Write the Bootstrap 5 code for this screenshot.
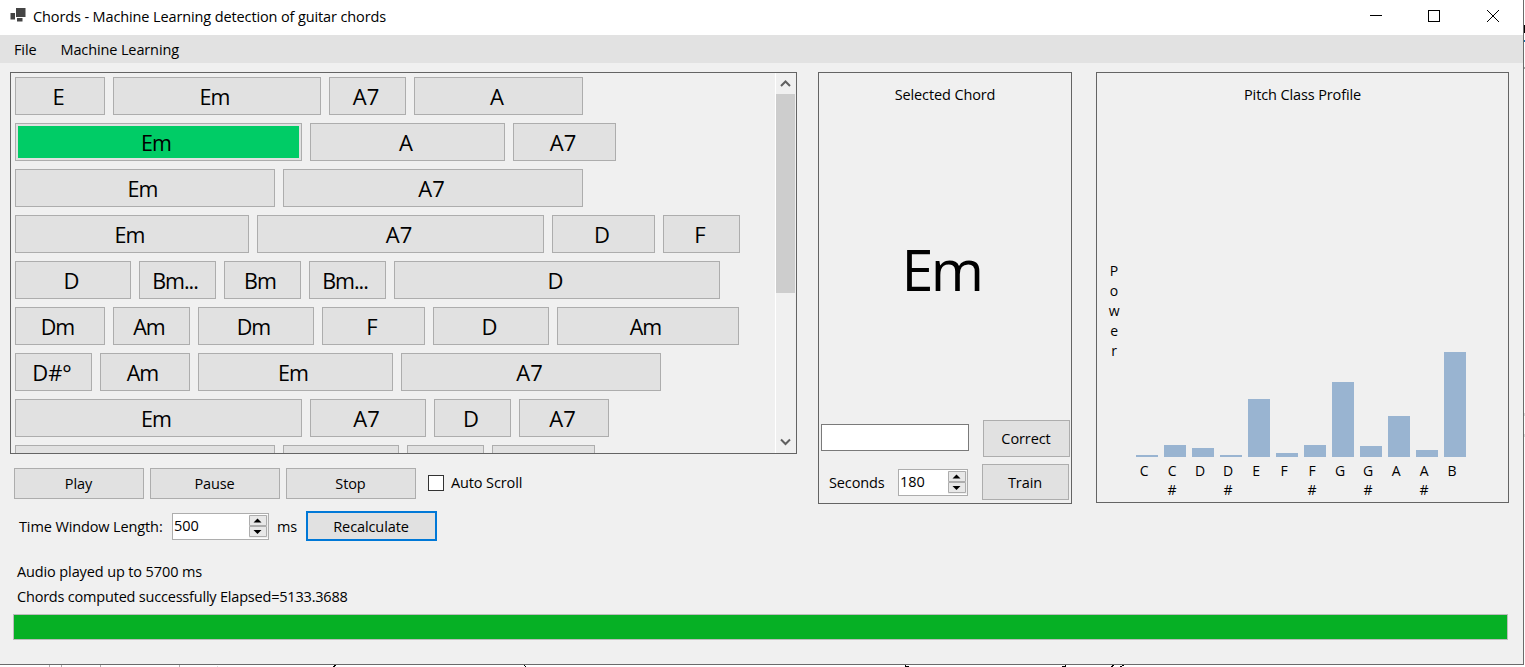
<!DOCTYPE html>
<html lang="en">
<head>
<meta charset="utf-8">
<title>Chords - Machine Learning detection of guitar chords</title>
<link href="https://cdn.jsdelivr.net/npm/bootstrap@5.3.0/dist/css/bootstrap.min.css" rel="stylesheet">
<style>
  body { width:1525px; height:667px; overflow:hidden; background:#fff; color:#000; font-family:"Open Sans","Noto Sans",sans-serif; font-size:14.5px; line-height:20px; letter-spacing:-.12px; font-stretch:88%; }
  .desk { width:1525px; height:667px; }
  .app-window { width:1524px; height:665px; background:#f0f0f0; border-right:1px solid #6b6b6b; border-bottom:1px solid #6b6b6b; }
  .title-bar { height:35px; background:#fff; padding:0 0 4px 10px; }
  .app-name { margin-left:6px; padding-top:2px; }
  .menu-row { height:28px; background:#e2e2e2; padding:2px 0 0 14px; gap:24px; }
  .work { padding:9px 14px 0 10px; height:442px; }
  .frame { border:1px solid #646464; }
  .left-col { width:787px; margin-right:21px; }
  .chord-list { height:382px; overflow:hidden; }
  .chord-rows { padding:4px; gap:8px; width:764px; }
  .chord-row { gap:8px; height:38px; }
  .wbtn { --bs-btn-padding-x:0; --bs-btn-padding-y:0; --bs-btn-border-radius:0; --bs-btn-color:#000; --bs-btn-bg:#e1e1e1; --bs-btn-border-color:#adadad; --bs-btn-hover-bg:#e5f1fb; --bs-btn-hover-border-color:#0078d7; --bs-btn-font-size:14.5px; --bs-btn-line-height:20px; flex:none; display:flex; align-items:center; justify-content:center; letter-spacing:-.1px; padding:1px 1px 0 0; }
  .chord { --bs-btn-font-size:22px; height:38px; padding:0 3px 1px 0; letter-spacing:0; }
  .chord.minor { font-size:21.5px; letter-spacing:-1px; padding:1px 5px 0 0; }
  .chord.playing { background:#00cc66; box-shadow:inset 0 0 0 2px #e1e1e1; }
  .scroller { width:21px; border-left:1px solid #fff; padding-right:1px; }
  .scroll-btn { height:21px; }
  .scroll-btn svg { display:block; }
  .thumb { height:199px; background:#cdcdcd; }
  .transport { padding:14px 0 0 4px; gap:6px; }
  .transport .wbtn { width:130px; height:31px; }
  .check { width:16px; height:16px; border:1px solid #333; background:#fff; margin:0 0 1px 6px; }
  .window-len { padding:12px 0 0 9px; height:42px; }
  .spin { height:27px; background:#fff; border:1px solid #adadad; padding:1px 0 1px 1px; }
  .spin-num { line-height:20px; letter-spacing:0; padding-top:1px; }
  .spin-btns { width:19px; background:#f0f0f0; }
  .spin-btns svg { display:block; }
  .wbtn.default { border:2px solid #0078d7; width:131px; height:30px; }
  .mid-col { width:254px; height:432px; margin-right:24px; }
  .panel-title { text-align:center; padding-top:12px; }
  .big-chord { font-size:57.5px; line-height:80px; letter-spacing:-2.5px; text-align:center; margin-top:124px; padding-right:7px; }
  .name-field { width:148px; height:27px; border:1px solid #7a7a7a; background:#fff; margin-top:4px; }
  .right-col { width:413px; height:431px; }
  .power { width:18px; text-align:center; font-size:14px; margin-left:8px; }
  .bars { height:120px; flex:none; padding-left:39px; gap:6px; }
  .bar { width:22px; background:#99b4d1; }
  .notes { padding-left:33px; font-size:14px; line-height:19px; padding-top:4px; text-align:center; }
  .notes > div { width:28px; }
  .status { padding:54px 0 0 17px; line-height:25px; }
  .elapsed { letter-spacing:-.2px; }
  .load { height:26px; margin:5px 15px 0 13px; border:1px solid #bcbcbc; --bs-progress-bg:#e6e6e6; --bs-progress-bar-bg:#06b025; --bs-progress-border-radius:0; }
  .behind { left:0; top:0; pointer-events:none; }
</style>
</head>
<body>
<div class="desk position-relative">
<div class="app-window d-flex flex-column">
  <header class="title-bar d-flex align-items-center justify-content-between">
    <div class="d-flex align-items-center">
      <svg width="17" height="17" viewBox="0 0 17 17"><path fill="#444" d="M6 1h9.500v9H6zM.5 6H5v6.500H.5zM7 11h5.500v3.500H7z"/></svg>
      <span class="app-name">Chords - Machine Learning detection of guitar chords</span>
    </div>
    <svg width="140" height="14" viewBox="0 0 140 14" style="margin-right:17px" fill="none" stroke="#000" shape-rendering="crispEdges"><path d="M4 6.500h12M62.500 1.500h11v11h-11z"/><path shape-rendering="auto" d="M121 1l12 12M133 1l-12 12"/></svg>
  </header>
  <nav class="menu-row d-flex align-items-center"><span>File</span><span>Machine Learning</span></nav>

  <main class="work d-flex align-items-start">
    <section class="left-col">
      <div class="chord-list frame d-flex justify-content-between">
        <div class="chord-rows d-flex flex-column" id="rows"></div>
        <div class="scroller d-flex flex-column">
          <div class="scroll-btn"><svg width="19" height="21" fill="none" stroke="#606060" stroke-width="2"><path d="M5 13l4.500-4.500L14 13"/></svg></div>
          <div class="thumb"></div>
          <div class="scroll-btn mt-auto"><svg width="19" height="21" fill="none" stroke="#606060" stroke-width="2"><path d="M5 7.500l4.500 4.500L14 7.500"/></svg></div>
        </div>
      </div>
      <div class="transport d-flex align-items-center">
        <button class="btn wbtn">Play</button><button class="btn wbtn">Pause</button><button class="btn wbtn">Stop</button>
        <span class="check"></span><span style="padding:0 0 2px 1px">Auto Scroll</span>
      </div>
      <div class="window-len d-flex align-items-center">
        <span style="width:153px;padding-top:2px">Time Window Length:</span>
        <div class="spin d-flex justify-content-between" style="width:97px"><span class="spin-num">500</span>
          <div class="spin-btns"><svg width="19" height="23"><path fill="#e8e8e8" stroke="#adadad" d="M.5.5h17v10H.5zM.5 11.500h17v10H.5z"/><path d="M4.500 7.500h8l-4-4zM4.500 15h8l-4 4z"/></svg></div></div>
        <span style="margin-left:8px;width:29px;padding-top:2px">ms</span>
        <button class="btn wbtn default">Recalculate</button>
      </div>
    </section>

    <section class="mid-col frame d-flex flex-column">
      <div class="panel-title">Selected Chord</div>
      <div class="big-chord">Em</div>
      <div class="d-flex align-items-start justify-content-between mt-auto" style="padding:0 1px 7px 2px">
        <div class="name-field"></div><button class="btn wbtn" style="width:87px;height:37px">Correct</button>
      </div>
      <div class="d-flex align-items-center" style="padding:0 2px 3px 10px">
        <span style="width:69px;padding-top:2px">Seconds</span>
        <div class="spin d-flex justify-content-between" style="width:70px"><span class="spin-num">180</span>
          <div class="spin-btns"><svg width="19" height="23"><path fill="#e8e8e8" stroke="#adadad" d="M.5.5h17v10H.5zM.5 11.500h17v10H.5z"/><path d="M4.500 7.500h8l-4-4zM4.500 15h8l-4 4z"/></svg></div></div>
        <button class="btn wbtn ms-auto" style="width:87px;height:36px">Train</button>
      </div>
    </section>

    <section class="right-col frame d-flex flex-column">
      <div class="panel-title">Pitch Class Profile</div>
      <div class="power" style="margin-top:156px">P<br>o<br>w<br>e<br>r</div>
      <div class="bars d-flex align-items-end" id="bars" style="margin-top:-24px"></div>
      <div class="notes d-flex" id="notes"></div>
    </section>
  </main>
  <footer>
    <div class="status"><div>Audio played up to 5700 ms</div><div class="elapsed">Chords computed successfully Elapsed=5133.3688</div></div>
    <div class="load progress"><div class="progress-bar w-100"></div></div>
  </footer>
</div>
<svg class="behind position-absolute" width="1525" height="667" shape-rendering="crispEdges">
  <path fill="#aaa" d="M49 665h1v2h-1zM61 665h1v2h-1zM100 665h1v2h-1zM179 665h1v2h-1zM1524 67h1v2h-1z"/>
  <path fill="#ddd" d="M217 666h1v1h-1zM1524 413h1v3h-1zM1524 434h1v3h-1z"/>
  <path fill="#000" d="M334 665h2v1h-2zM333 666h2v1h-2zM524 665h1v1h-1zM525 666h1v1h-1zM905 665h1v2h-1zM906 666h3v1h-3zM1065 665h1v2h-1zM1062 666h3v1h-3zM1112 665h2v1h-2zM1111 666h2v1h-2zM1122 665h2v1h-2zM1120 666h2v1h-2zM1524 25h1v8h-1z"/>
  <path fill="#0f6ea8" d="M1524 40h1v2h-1z"/>
</svg>
</div>
<script>
  const rows = [
    [['E',90],['Em',208],['A7',77],['A',169]],
    [['Em',287,1],['A',195],['A7',103]],
    [['Em',260],['A7',300]],
    [['Em',234],['A7',287],['D',103],['F',77]],
    [['D',116],['Bm...',77],['Bm',77],['Bm...',77],['D',326]],
    [['Dm',90],['Am',77],['Dm',116],['F',103],['D',116],['Am',182]],
    [['D#°',77],['Am',90],['Em',195],['A7',260]],
    [['Em',287],['A7',116],['D',77],['A7',90]],
    [['',260],['',116],['',77],['',103]]
  ];
  document.getElementById('rows').innerHTML = rows.map(r => '<div class="chord-row d-flex">' +
    r.map(c => `<button class="btn wbtn chord${c[0].includes('m') ? ' minor' : ''}${c[2] ? ' playing' : ''}" style="width:${c[1]}px">${c[0]}</button>`).join('') + '</div>').join('');
  const profile = [['C',2],['C#',12],['D',9],['D#',2],['E',58],['F',4],['F#',12],['G',75],['G#',11],['A',41],['A#',7],['B',105]];
  document.getElementById('bars').innerHTML = profile.map(p => `<div class="bar" style="height:${p[1]}px"></div>`).join('');
  document.getElementById('notes').innerHTML = profile.map(p => `<div>${p[0].split('').join('<br>')}</div>`).join('');
</script>
<script src="https://cdn.jsdelivr.net/npm/bootstrap@5.3.0/dist/js/bootstrap.bundle.min.js"></script>
</body>
</html>
